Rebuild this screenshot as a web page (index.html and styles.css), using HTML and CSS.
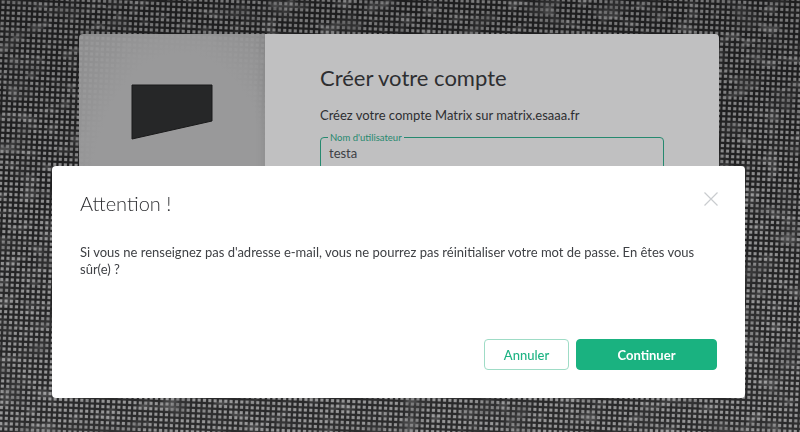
FILE: index.html
```html
<!DOCTYPE html>
<html lang="fr">
<head>
    <meta charset="UTF-8">
    <title>Créer votre compte</title>
    <link rel="stylesheet" href="styles.css">
</head>
<body>
    <!-- blotchy patches over the halftone wallpaper -->
    <svg class="backdrop-noise" width="800" height="432">
        <filter id="blotches" x="0" y="0" width="100%" height="100%">
            <feTurbulence type="fractalNoise" baseFrequency="0.03 0.05" numOctaves="3" seed="7"/>
            <feColorMatrix type="matrix" values="0 0 0 0 0.1  0 0 0 0 0.1  0 0 0 0 0.1  4 0 0 0 -2.1"/>
        </filter>
        <filter id="blotches-light" x="0" y="0" width="100%" height="100%">
            <feTurbulence type="fractalNoise" baseFrequency="0.05 0.09" numOctaves="3" seed="21"/>
            <feColorMatrix type="matrix" values="0 0 0 0 1  0 0 0 0 1  0 0 0 0 1  0 4 0 0 -2.2"/>
        </filter>
        <rect class="noise-dark" width="800" height="432" filter="url(#blotches)"/>
        <rect class="noise-light" width="800" height="432" filter="url(#blotches-light)"/>
    </svg>

    <div class="auth-page">
        <div class="auth-card">
            <div class="auth-side">
                <svg class="auth-logo" width="82" height="56" viewBox="0 0 82 56">
                    <path d="M1 1H81V37L1 55Z" fill="#232524" stroke="#111" stroke-width="1"/>
                </svg>
            </div>
            <div class="auth-main">
                <h1>Créer votre compte</h1>
                <p>Créez votre compte Matrix sur matrix.esaaa.fr</p>
                <div class="field">
                    <span class="field-label">Nom d'utilisateur</span>
                    <span class="field-value">testa</span>
                </div>
            </div>
        </div>
    </div>

    <div class="overlay">
        <div class="dialog">
            <div class="dialog-head">
                <h2>Attention !</h2>
                <svg class="dialog-close" width="14" height="14" viewBox="0 0 14 14">
                    <path d="M0.5 0.5L13.5 13.5M13.5 0.5L0.5 13.5" stroke="#c9cccf" stroke-width="1.2" fill="none"/>
                </svg>
            </div>
            <p class="dialog-text">Si vous ne renseignez pas d'adresse e-mail, vous ne pourrez pas réinitialiser votre mot de passe. En êtes vous sûr(e) ?</p>
            <div class="dialog-buttons">
                <button class="btn-cancel">Annuler</button>
                <button class="btn-primary">Continuer</button>
            </div>
        </div>
    </div>
</body>
</html>
```

FILE: styles.css
```css
* {
    margin: 0;
    padding: 0;
    box-sizing: border-box;
}

/* Halftone wallpaper: two slightly turned sets of dark lines */
body {
    width: 800px;
    height: 432px;
    overflow: hidden;
    position: relative;
    font-family: 'Lato', 'Open Sans', sans-serif;
    color: #2e2f32;
    background-color: #dcdcdc;
    background-image:
        linear-gradient(to bottom, rgba(0, 0, 0, 0.22), rgba(0, 0, 0, 0.04) 45%, rgba(255, 255, 255, 0.06)),
        repeating-linear-gradient(2.5deg, #1c1c1c 0, #1c1c1c 1.1px, rgba(28, 28, 28, 0.08) 2.3px, rgba(28, 28, 28, 0.08) 4.2px, #1c1c1c 5.33px),
        repeating-linear-gradient(92.5deg, #1c1c1c 0, #1c1c1c 1.1px, rgba(28, 28, 28, 0.08) 2.3px, rgba(28, 28, 28, 0.08) 4.2px, #1c1c1c 5.33px);
}

.backdrop-noise {
    position: absolute;
    top: 0;
    left: 0;
}

.noise-dark {
    opacity: 0.4;
}

.noise-light {
    opacity: 0.22;
}

/* Page behind the dialog */
.auth-page {
    position: relative;
    padding: 34px 81px 0 79px;
}

.auth-card {
    display: flex;
    height: 320px;
    border-radius: 4px 4px 0 0;
    overflow: hidden;
}

.auth-side {
    width: 186px;
    padding: 50px 0 0 52px;
    background: radial-gradient(ellipse at 55% 50%, #c8c8c8 60%, rgba(205, 205, 205, 0.85) 100%);
    box-shadow: inset -8px 0 12px -8px rgba(0, 0, 0, 0.12);
}

.auth-logo {
    display: block;
}

.auth-main {
    flex: 1;
    padding: 30px 55px 0 55px;
    background: #fff;
}

.auth-main h1 {
    font-size: 22px;
    font-weight: 400;
    line-height: 27px;
    color: #2e2f32;
}

.auth-main p {
    margin-top: 16px;
    font-size: 13px;
    line-height: 17px;
}

.field {
    display: flex;
    flex-direction: column;
    position: relative;
    margin-top: 13px;
    height: 70px;
    padding: 7px 8px;
    border: 1px solid #23b08a;
    border-radius: 4px;
}

.field-label {
    position: absolute;
    top: -6px;
    left: 7px;
    padding: 0 2px;
    background: #fff;
    font-size: 9.5px;
    line-height: 11px;
    color: #23b08a;
}

.field-value {
    font-size: 13px;
    line-height: 17px;
    color: #45474c;
}

/* Dialog */
.overlay {
    position: absolute;
    top: 0;
    left: 0;
    width: 100%;
    height: 100%;
    padding: 166px 55px 34px 52px;
    background: rgba(46, 48, 51, 0.3);
    will-change: transform;
}

.dialog {
    display: flex;
    flex-direction: column;
    height: 232px;
    padding: 26px 27px 28px 28px;
    background: #fff;
    border-radius: 4px;
}

.dialog-head {
    display: flex;
    justify-content: space-between;
    align-items: flex-start;
}

.dialog-head h2 {
    margin-top: -1px;
    font-size: 20px;
    font-weight: 300;
    line-height: 25px;
    color: #2e2f32;
}

.dialog-close {
    display: block;
}

.dialog-text {
    margin-top: 28px;
    font-size: 13px;
    line-height: 17px;
    color: #3f4145;
}

.dialog-buttons {
    display: flex;
    justify-content: flex-end;
    gap: 7px;
    margin-top: auto;
    padding-right: 1px;
}

.dialog-buttons button {
    height: 31px;
    border-radius: 4px;
    font-family: inherit;
    font-size: 13px;
    cursor: pointer;
}

.btn-cancel {
    width: 85px;
    border: 1px solid #9fdcc6;
    background: #fff;
    color: #1db383;
    font-weight: 500;
}

.btn-primary {
    width: 141px;
    border: 1px solid #1ab280;
    background: #1ab280;
    color: #fff;
    font-weight: 700;
}
```
